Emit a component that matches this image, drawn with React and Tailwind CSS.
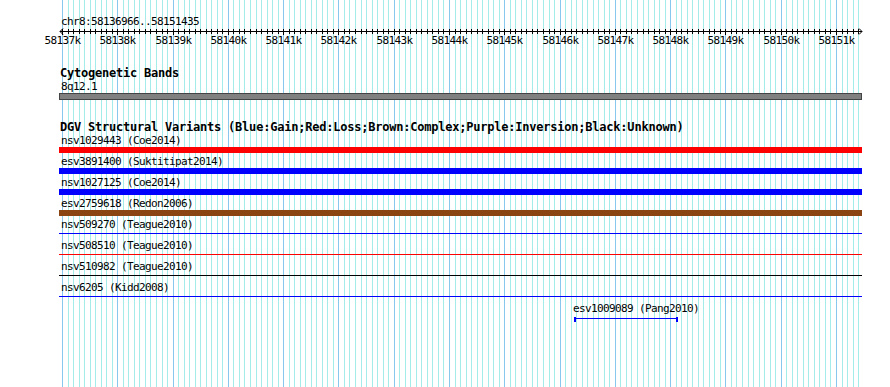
import React from "react";

const X0 = 62;
const STEP = 5.5286;
const N = 145;
const xs = Array.from({ length: N }, (_, i) => Math.round(X0 + i * STEP));

function Grid() {
  return (
    <svg className="absolute inset-0" width="890" height="387" shapeRendering="crispEdges">
      {xs.map((x, i) => (
        <line
          key={i}
          x1={x + 0.5}
          x2={x + 0.5}
          y1="0"
          y2="387"
          stroke={i % 10 === 0 ? "#88c8ee" : "#a4ecea"}
          strokeWidth="1"
        />
      ))}
    </svg>
  );
}

function Ruler() {
  // svg starts at page x=0, y=28
  const ly = 3.5;
  return (
    <svg width="890" height="20" className="block -ml-[59px]" shapeRendering="crispEdges">
      <line x1="60" x2="862" y1={ly} y2={ly} stroke="#000" />
      <polyline points="63,0.5 60,3.5 63,6.5" fill="none" stroke="#000" shapeRendering="auto" />
      <polyline points="859,0.5 862,3.5 859,6.5" fill="none" stroke="#000" shapeRendering="auto" />
      {xs.map((x, i) => (
        <line
          key={i}
          x1={x + 0.5}
          x2={x + 0.5}
          y1="1"
          y2={i % 10 === 0 ? 7 : 6}
          stroke="#000"
        />
      ))}
      {xs
        .filter((_, i) => i % 10 === 0)
        .map((x, j) => (
          <text
            key={j}
            x={x + 0.5}
            y="16"
            textAnchor="middle"
            fontFamily="'DejaVu Sans Mono', monospace"
            fontSize="11"
            letterSpacing="-0.62"
            fill="#000"
          >
            {`${58137 + j}k`}
          </text>
        ))}
    </svg>
  );
}

const ROWS = [
  { label: "nsv1029443 (Coe2014)", thick: true, color: "bg-[#ff0000]" },
  { label: "esv3891400 (Suktitipat2014)", thick: true, color: "bg-[#0000ff]" },
  { label: "nsv1027125 (Coe2014)", thick: true, color: "bg-[#0000ff]" },
  { label: "esv2759618 (Redon2006)", thick: true, color: "bg-[#8b4513]" },
  { label: "nsv509270 (Teague2010)", thick: false, color: "bg-[#0000ff]" },
  { label: "nsv508510 (Teague2010)", thick: false, color: "bg-[#ff0000]" },
  { label: "nsv510982 (Teague2010)", thick: false, color: "bg-[#000000]" },
  { label: "nsv6205 (Kidd2008)", thick: false, color: "bg-[#0000ff]" },
];

const small = "h-[13px] leading-[13px] text-[11px] tracking-[-0.62px] whitespace-nowrap";
const bold = "h-[13px] leading-[13px] text-[12px] font-bold tracking-[-0.22px] whitespace-nowrap";

function Row({ label, thick, color }) {
  return (
    <div className="flex flex-col">
      <div className={`ml-[2px] ${small}`}>{label}</div>
      {thick ? (
        <div className={`h-[6px] w-full ${color}`} />
      ) : (
        <div className="h-[6px] pt-[2px]">
          <div className={`h-px w-full ${color}`} />
        </div>
      )}
      <div className="h-[2px]" />
    </div>
  );
}

export default function App() {
  return (
    <div
      className="relative w-[890px] h-[387px] overflow-hidden bg-white text-black"
      style={{ fontFamily: "'DejaVu Sans Mono', 'Liberation Mono', monospace" }}
    >
      <Grid />
      <div className="relative flex w-[862px] flex-col pl-[59px] pt-[15px]">
        <div className={`ml-[2px] ${small}`}>chr8:58136966..58151435</div>
        <Ruler />
        <div className="h-[19px]" />
        <div className={`ml-[1px] ${bold}`}>Cytogenetic Bands</div>
        <div className={`ml-[2px] ${small}`}>8q12.1</div>
        <div className="h-[7px] w-full border border-[#444444] bg-[#808080]" />
        <div className="h-[21px]" />
        <div className={`ml-[1px] ${bold}`}>
          DGV Structural Variants (Blue:Gain;Red:Loss;Brown:Complex;Purple:Inversion;Black:Unknown)
        </div>
        {ROWS.map((r) => (
          <Row key={r.label} {...r} />
        ))}
        <div className="ml-[515px] flex w-[104px] flex-col">
          <div className={`-ml-[1px] ${small}`}>esv1009089 (Pang2010)</div>
          <div className="flex h-[8px] items-start">
            <div className="mt-[2px] h-[5px] w-[2px] bg-[#0000ff]" />
            <div className="mt-[3px] h-px flex-1 bg-[#0000ff]" />
            <div className="mt-[2px] h-[5px] w-[2px] bg-[#0000ff]" />
          </div>
        </div>
      </div>
    </div>
  );
}
